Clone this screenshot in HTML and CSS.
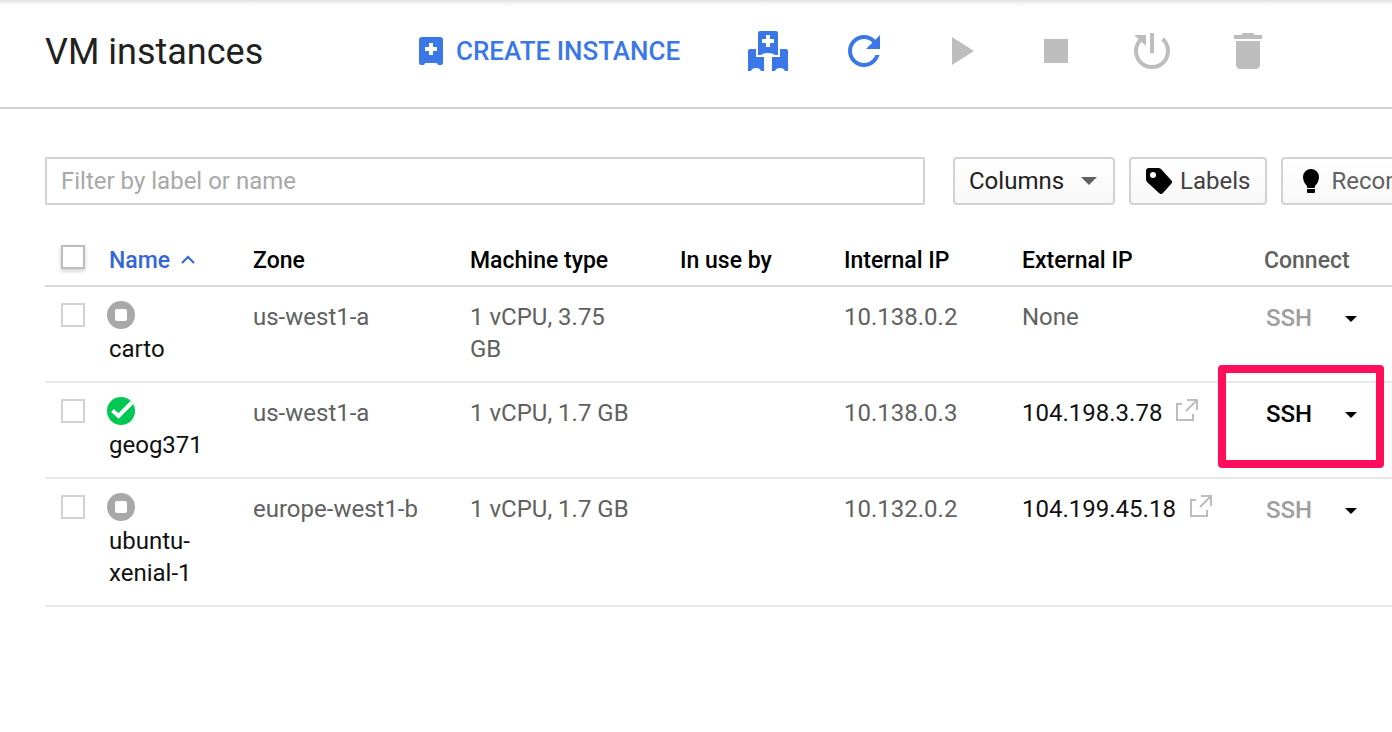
FILE: index.html
```html
<!DOCTYPE html>
<html lang="en">
<head>
<meta charset="utf-8">
<title>VM instances</title>
<link rel="stylesheet" href="styles.css">
</head>
<body>
<svg class="defs" aria-hidden="true">
  <symbol id="stopped" viewBox="0 0 28 28"><circle cx="14" cy="14" r="14" fill="#a8a8a8"/><rect x="8" y="8" width="12" height="12" rx="2" fill="#fff"/></symbol>
  <symbol id="running" viewBox="0 0 28 28"><circle cx="14" cy="14" r="14" fill="#00c853"/><path d="M5.500 13.500l6 5.500L25 5.500" fill="none" stroke="#fff" stroke-width="4"/></symbol>
  <symbol id="external" viewBox="0 0 22 22"><path d="M6 5H1v16h16v-6M11 1h10v10M21 1L10 12" fill="none" stroke="#bdbdbd" stroke-width="2"/></symbol>
  <symbol id="caret" viewBox="0 0 12 6"><path d="M0 0h12L6 6z" fill="currentColor"/></symbol>
</svg>
<header class="header">
  <h1 class="title">VM instances</h1>
  <button class="create" type="button">
    <svg width="24" height="28" viewBox="0 0 24 28" aria-hidden="true"><path fill="currentColor" fill-rule="evenodd" d="M3 0h18q3 0 3 3v23q0 2-2 2h-2q-2 0-2-2H6q0 2-2 2H2q-2 0-2-2V3q0-3 3-3zM10 6v4H6v4h4v4h4v-4h4v-4h-4V6z"/></svg>
    <span>CREATE INSTANCE</span>
  </button>
  <div class="actions">
    <button class="action" type="button" aria-label="Create instance group">
      <svg width="40" height="40" viewBox="0 0 40 40"><path fill="currentColor" fill-rule="evenodd" d="M12 0h16q2 0 2 2v22h-3q-2-2-7-2t-7 2h-3V2q0-2 2-2zM18 4v4h-4v4h4v4h4v-4h4V8h-4V4zM2 18h6v8h8v14h-3q-1-3-5-3t-5 3H0V20q0-2 2-2zM38 18h-6v8h-8v14h3q1-3 5-3t5 3h3V20q0-2-2-2z"/></svg>
    </button>
    <button class="action" type="button" aria-label="Refresh">
      <svg width="48" height="48" viewBox="0 0 24 24"><path fill="currentColor" d="M17.65 6.35C16.2 4.9 14.21 4 12 4c-4.42 0-7.99 3.58-7.99 8s3.570 8 7.990 8c3.730 0 6.840-2.550 7.730-6h-2.080c-.82 2.330-3.040 4-5.650 4-3.310 0-6-2.690-6-6s2.690-6 6-6c1.660 0 3.140.69 4.220 1.780L13 11h7V4l-2.350 2.350z"/></svg>
    </button>
    <button class="action" type="button" aria-label="Start" disabled>
      <svg width="48" height="48" viewBox="0 0 24 24"><path fill="currentColor" d="M8 5v14l11-7z"/></svg>
    </button>
    <button class="action" type="button" aria-label="Stop" disabled>
      <svg width="48" height="48" viewBox="0 0 24 24"><path fill="currentColor" d="M6 6h12v12H6z"/></svg>
    </button>
    <button class="action" type="button" aria-label="Reset" disabled>
      <svg width="48" height="48" viewBox="0 0 48 48"><path fill="none" stroke="currentColor" stroke-width="4" d="M34.500 12A16 16 0 1 1 13.500 12"/><path fill="currentColor" d="M22 6h4v20h-4zM6 8h12v11z"/></svg>
    </button>
    <button class="action" type="button" aria-label="Delete" disabled>
      <svg width="48" height="48" viewBox="0 0 24 24"><path fill="currentColor" d="M6 19c0 1.100.9 2 2 2h8c1.100 0 2-.9 2-2V7H6v12zM19 4h-3.500l-1-1h-5l-1 1H5v2h14V4z"/></svg>
    </button>
  </div>
</header>
<main class="content">
  <div class="toolbar">
    <input class="filter" type="text" placeholder="Filter by label or name" aria-label="Filter by label or name">
    <div class="buttons">
      <button class="tool columns" type="button"><span>Columns</span><svg width="16" height="8" viewBox="0 0 16 8" aria-hidden="true"><path d="M0 0h16L8 8z" fill="#616161"/></svg></button>
      <button class="tool labels" type="button"><svg width="26" height="26" viewBox="0 0 26 26" aria-hidden="true"><path fill="#000" fill-rule="evenodd" d="M3 0h9q2 0 3 1l10 11q2 2 0 4l-8 9q-2 2-4 0L1 14q-1-1-1-3V3q0-3 3-3zM7 4a3 3 0 1 0 0 6a3 3 0 1 0 0-6z"/></svg><span>Labels</span></button>
      <button class="tool recommend" type="button"><svg width="16" height="24" viewBox="0 0 16 24" aria-hidden="true"><path fill="#000" d="M8 0a8 8 0 0 1 8 8q0 5-4 9v1q0 1-1 1H5q-1 0-1-1v-1Q0 13 0 8a8 8 0 0 1 8-8zM4 20h8v3q0 1-1 1H5q-1 0-1-1z"/></svg><span>Recommendations</span></button>
    </div>
  </div>
  <table class="instances">
    <colgroup><col class="c-check"><col class="c-name"><col class="c-zone"><col class="c-machine"><col class="c-use"><col class="c-internal"><col class="c-external"><col></colgroup>
    <thead>
      <tr>
        <th class="check"><input class="box box-all" type="checkbox" aria-label="Select all instances"></th>
        <th class="name"><button class="sort" type="button">Name<svg width="14" height="9" viewBox="0 0 14 9" aria-hidden="true"><path d="M1 8l6-6 6 6" fill="none" stroke="currentColor" stroke-width="2"/></svg></button></th>
        <th>Zone</th><th>Machine type</th><th>In use by</th><th>Internal IP</th><th>External IP</th><th class="muted">Connect</th>
      </tr>
    </thead>
    <tbody>
      <tr>
        <td class="check"><input class="box" type="checkbox" aria-label="Select carto"></td>
        <td class="name"><svg class="status" role="img" aria-label="Stopped"><use href="#stopped"/></svg><a href="#carto">carto</a></td>
        <td>us-west1-a</td><td class="machine">1 vCPU, 3.75 GB</td><td></td><td>10.138.0.2</td><td>None</td>
        <td class="connect"><div class="ssh-group"><button class="ssh" type="button" disabled>SSH</button><button class="more" type="button" aria-label="More connection options"><svg width="12" height="6"><use href="#caret"/></svg></button></div></td>
      </tr>
      <tr>
        <td class="check"><input class="box" type="checkbox" aria-label="Select geog371"></td>
        <td class="name"><svg class="status" role="img" aria-label="Running"><use href="#running"/></svg><a href="#geog371">geog371</a></td>
        <td>us-west1-a</td><td class="machine">1 vCPU, 1.7 GB</td><td></td><td>10.138.0.3</td>
        <td><a class="ip" href="#ip-geog371">104.198.3.78<svg width="22" height="22" aria-hidden="true"><use href="#external"/></svg></a></td>
        <td class="connect highlighted"><div class="ssh-group"><button class="ssh" type="button">SSH</button><button class="more" type="button" aria-label="More connection options"><svg width="12" height="6"><use href="#caret"/></svg></button></div><div class="highlight"></div></td>
      </tr>
      <tr>
        <td class="check"><input class="box" type="checkbox" aria-label="Select ubuntu-xenial-1"></td>
        <td class="name"><svg class="status" role="img" aria-label="Stopped"><use href="#stopped"/></svg><a href="#ubuntu-xenial-1">ubuntu-xenial-1</a></td>
        <td>europe-west1-b</td><td class="machine">1 vCPU, 1.7 GB</td><td></td><td>10.132.0.2</td>
        <td><a class="ip" href="#ip-ubuntu">104.199.45.18<svg width="22" height="22" aria-hidden="true"><use href="#external"/></svg></a></td>
        <td class="connect"><div class="ssh-group"><button class="ssh" type="button" disabled>SSH</button><button class="more" type="button" aria-label="More connection options"><svg width="12" height="6"><use href="#caret"/></svg></button></div></td>
      </tr>
    </tbody>
  </table>
</main>
</body>
</html>
```
FILE: styles.css
```css
* {
  box-sizing: border-box;
}

body {
  margin: 0;
  background: #fff;
  color: #616161;
  font-family: Roboto, "Liberation Sans", sans-serif;
  font-size: 24px;
  line-height: 32px;
  overflow-x: hidden;
}

button {
  margin: 0;
  padding: 0;
  border: 0;
  background: none;
  color: inherit;
  font: inherit;
}

a {
  color: #111;
  text-decoration: none;
}

svg {
  display: block;
  flex: none;
}

.defs {
  display: none;
}

/* Page header */
.header {
  display: flex;
  align-items: center;
  padding: 24px 0 29px 45px;
  border-bottom: 2px solid #d2d2d2;
  background: linear-gradient(#e0e0e0, #f8f8f8 4px, #fff 8px);
}

.title {
  flex: 0 0 374px;
  margin: 0;
  padding-top: 2px;
  color: #212121;
  font-size: 36px;
  font-weight: 400;
  line-height: 52px;
}

.create {
  display: flex;
  flex: 0 0 325px;
  align-items: center;
  gap: 13px;
  color: #3b78e7;
  font-size: 26px;
  font-weight: 500;
  white-space: nowrap;
}

.actions {
  display: flex;
  gap: 48px;
}

.action {
  display: grid;
  place-items: center;
  width: 48px;
  height: 48px;
  color: #3b78e7;
}

.action:disabled {
  color: #bdbdbd;
}

/* Filter and table tools */
.content {
  padding: 48px 0 0 45px;
}

.toolbar {
  display: flex;
  gap: 28px;
  margin-bottom: 30px;
  overflow: hidden;
}

.filter {
  flex: 0 0 880px;
  height: 48px;
  padding: 0 14px;
  border: 2px solid #d2d2d2;
  border-radius: 2px;
  background: #fff;
  color: #212121;
  font: inherit;
}

.filter::placeholder {
  color: #a8a8a8;
  opacity: 1;
}

.buttons {
  display: flex;
  gap: 14px;
}

.tool {
  display: flex;
  align-items: center;
  height: 48px;
  padding: 0 14px;
  border: 2px solid #d2d2d2;
  border-radius: 4px;
  background: linear-gradient(#fff, #f8f8f8);
  white-space: nowrap;
}

.columns {
  gap: 17px;
  padding-right: 16px;
  color: #212121;
}

.labels {
  gap: 8px;
  padding-left: 15px;
  padding-right: 15px;
  color: #424242;
}

.recommend {
  gap: 12px;
  padding-left: 20px;
}

/* Instance table */
.instances {
  width: 100%;
  border-collapse: separate;
  border-spacing: 0;
  table-layout: fixed;
}

.c-check { width: 62px; }
.c-name { width: 146px; }
.c-zone { width: 217px; }
.c-machine { width: 210px; }
.c-use { width: 164px; }
.c-internal { width: 178px; }
.c-external { width: 242px; }

th {
  height: 52px;
  padding: 2px 0 0;
  border-bottom: 2px solid #d8d8d8;
  color: #000;
  font-size: 23px;
  font-weight: 500;
  text-align: left;
  vertical-align: middle;
  white-space: nowrap;
}

th.muted {
  color: #616161;
}

td {
  padding: 14px 0 16px;
  border-bottom: 2px solid #e8e8e8;
  vertical-align: top;
}

.check {
  padding-left: 16px;
}

td.check {
  padding-top: 16px;
}

.box {
  display: block;
  width: 24px;
  height: 24px;
  margin: 0;
  border: 2px solid #d2d2d2;
  background: #fff;
  appearance: none;
}

.box-all {
  margin-bottom: 8px;
  border-color: #bdbdbd;
  box-shadow: 0 2px 4px rgba(0, 0, 0, 0.2);
}

.sort {
  display: flex;
  align-items: center;
  gap: 11px;
  padding-left: 2px;
  color: #3367d6;
}

.sort svg {
  margin-bottom: 4px;
}

.status {
  width: 28px;
  height: 28px;
  margin-bottom: 4px;
}

.name a {
  display: block;
  padding: 0 32px 0 2px;
}

.machine {
  padding-right: 40px;
}

.ip {
  display: flex;
  gap: 14px;
}

.ip svg {
  margin-top: 2px;
}

.connect {
  padding-left: 2px;
}

.ssh-group {
  display: flex;
  align-items: center;
  gap: 25px;
  padding-top: 1px;
}

.ssh {
  color: #000;
  font-size: 24px;
  font-weight: 500;
}

.ssh:disabled {
  color: #9e9e9e;
}

.more {
  display: grid;
  place-items: center;
  width: 28px;
  height: 32px;
  padding-top: 2px;
  color: #000;
}

/* Callout drawn round the SSH control */
.highlighted {
  position: relative;
}

.highlight {
  position: absolute;
  top: -18px;
  left: -46px;
  width: 166px;
  height: 103px;
  border: 8px solid #ff0f5b;
  border-radius: 4px;
  pointer-events: none;
}
```
